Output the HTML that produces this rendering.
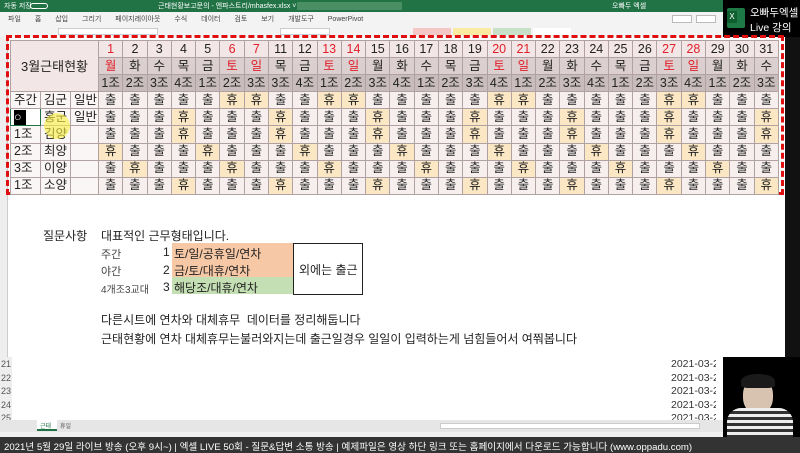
<!DOCTYPE html>
<html><head><meta charset="utf-8"><style>
*{margin:0;padding:0;box-sizing:border-box}
body{width:800px;height:453px;overflow:hidden;background:#fff;font-family:"Liberation Sans","Noto Sans CJK KR",sans-serif;position:relative;color:#222}
.abs{position:absolute}
#tbl{position:absolute;left:10px;top:40px;border-collapse:collapse;table-layout:fixed;width:768px}
#tbl td{height:17.1px;border:1px solid #b0a2a2;text-align:center;font-size:12.5px;line-height:15px;background:#f7eeee;padding:0;white-space:nowrap;overflow:hidden}
#tbl td.h{background:#fbe7c4}
#tbl tr.hd td{background:#f3e6e6}
#tbl tr.wk td{background:#dccfcf}
#tbl tr.jo td{background:#c9bcbc}
#tbl td.r{color:#e0202a}
#tbl td.l{text-align:left;padding-left:3px;background:#fbf6f6}
#tbl td.big{background:#dccccc;font-size:13px}
.t{position:absolute;font-size:11.5px;white-space:nowrap}
</style></head><body>
<div class="abs" style="left:0;top:0;width:723px;height:12px;background:#217346"></div>
<div class="abs" style="left:30px;top:3px;width:18px;height:6px;border:1px solid #fff;border-radius:4px"></div>
<div class="t" style="left:4px;top:1px;font-size:7px;color:#fff">자동 저장</div>
<div class="t" style="left:158px;top:1px;font-size:7px;color:#fff">근태현황보고문의 - 엔파스트리/mhasfex.xlsx ˅</div>
<div class="abs" style="left:297px;top:2px;width:105px;height:8px;background:#4a8f63"></div>
<div class="t" style="top:1px;font-size:7px;color:#fff;left:612px">오빠두 엑셀</div>
<div class="abs" style="left:0;top:12px;width:723px;height:25px;background:#f3f3f3"></div>
<div class="t" style="left:8px;top:14px;font-size:7px;color:#444;word-spacing:12px">파일 홈 삽입 그리기 페이지레이아웃 수식 데이터 검토 보기 개발도구 PowerPivot</div>
<div class="abs" style="left:58px;top:28px;width:100px;height:7px;background:#fff;border:1px solid #ccc"></div>
<div class="abs" style="left:280px;top:28px;width:50px;height:7px;background:#fff;border:1px solid #ccc"></div>
<div class="abs" style="left:413px;top:28px;width:38px;height:7px;background:#f4c7c7"></div>
<div class="abs" style="left:453px;top:28px;width:38px;height:7px;background:#fbeaa2"></div>
<div class="abs" style="left:493px;top:28px;width:38px;height:7px;background:#c8dfc8"></div>
<div class="abs" style="left:533px;top:28px;width:38px;height:7px;background:#fff"></div>
<div class="abs" style="left:672px;top:15px;width:20px;height:8px;border:1px solid #bbb;background:#fff"></div>
<div class="abs" style="left:696px;top:15px;width:20px;height:8px;border:1px solid #bbb;background:#fff"></div>
<div class="abs" style="left:723px;top:0;width:77px;height:37px;background:#000"></div>
<div class="abs" style="left:727px;top:8px;width:18px;height:20px;background:#1d7a45;border-radius:2px"></div>
<div class="abs" style="left:727px;top:11px;width:10px;height:12px;background:#0f5e30;color:#fff;font-size:8px;text-align:center;line-height:12px">X</div>
<div class="t" style="left:750px;top:5px;color:#fff;font-size:10.5px">오빠두엑셀</div>
<div class="t" style="left:750px;top:20px;color:#fff;font-size:10.5px">Live 강의</div>
<div class="abs" style="left:0;top:37px;width:8px;height:383px;background:#eee;border-right:1px solid #ccc"></div>
<div class="abs" style="left:785px;top:37px;width:15px;height:320px;background:#111"></div>
<div class="abs" style="left:6px;top:35px;width:778px;height:160px;border:3px dashed #e01010"></div>
<table id="tbl">
<colgroup><col style="width:30px"><col style="width:30px"><col style="width:28px"><col span="28" style="width:24.29px"></colgroup>
<tr class="hd"><td class="big" colspan="3" rowspan="3">3월근태현황</td><td class="r">1</td><td>2</td><td>3</td><td>4</td><td>5</td><td class="r">6</td><td class="r">7</td><td>11</td><td>12</td><td class="r">13</td><td class="r">14</td><td>15</td><td>16</td><td>17</td><td>18</td><td>19</td><td class="r">20</td><td class="r">21</td><td>22</td><td>23</td><td>24</td><td>25</td><td>26</td><td class="r">27</td><td class="r">28</td><td>29</td><td>30</td><td>31</td></tr>
<tr class="wk"><td class="r">월</td><td>화</td><td>수</td><td>목</td><td>금</td><td class="r">토</td><td class="r">일</td><td>목</td><td>금</td><td class="r">토</td><td class="r">일</td><td>월</td><td>화</td><td>수</td><td>목</td><td>금</td><td class="r">토</td><td class="r">일</td><td>월</td><td>화</td><td>수</td><td>목</td><td>금</td><td class="r">토</td><td class="r">일</td><td>월</td><td>화</td><td>수</td></tr>
<tr class="jo"><td>1조</td><td>2조</td><td>3조</td><td>4조</td><td>1조</td><td>2조</td><td>3조</td><td>3조</td><td>4조</td><td>1조</td><td>2조</td><td>3조</td><td>4조</td><td>1조</td><td>2조</td><td>3조</td><td>4조</td><td>1조</td><td>2조</td><td>3조</td><td>4조</td><td>1조</td><td>2조</td><td>3조</td><td>4조</td><td>1조</td><td>2조</td><td>3조</td></tr>
<tr><td class="l">주간</td><td class="l">김군</td><td class="l">일반</td><td>출</td><td>출</td><td>출</td><td>출</td><td>출</td><td class="h">휴</td><td class="h">휴</td><td>출</td><td>출</td><td class="h">휴</td><td class="h">휴</td><td>출</td><td>출</td><td>출</td><td>출</td><td>출</td><td class="h">휴</td><td class="h">휴</td><td>출</td><td>출</td><td>출</td><td>출</td><td>출</td><td class="h">휴</td><td class="h">휴</td><td>출</td><td>출</td><td>출</td></tr>
<tr><td class="l" style="background:#fff;border:1px solid #217346"><span style="display:inline-block;background:#000;color:#fff;width:12px">○</span></td><td class="l">홍군</td><td class="l">일반</td><td>출</td><td>출</td><td>출</td><td class="h">휴</td><td>출</td><td>출</td><td>출</td><td class="h">휴</td><td>출</td><td>출</td><td>출</td><td class="h">휴</td><td>출</td><td>출</td><td>출</td><td class="h">휴</td><td>출</td><td>출</td><td>출</td><td class="h">휴</td><td>출</td><td>출</td><td>출</td><td class="h">휴</td><td>출</td><td>출</td><td>출</td><td class="h">휴</td></tr>
<tr><td class="l">1조</td><td class="l">김양</td><td class="l"></td><td>출</td><td>출</td><td>출</td><td class="h">휴</td><td>출</td><td>출</td><td>출</td><td class="h">휴</td><td>출</td><td>출</td><td>출</td><td class="h">휴</td><td>출</td><td>출</td><td>출</td><td class="h">휴</td><td>출</td><td>출</td><td>출</td><td class="h">휴</td><td>출</td><td>출</td><td>출</td><td class="h">휴</td><td>출</td><td>출</td><td>출</td><td class="h">휴</td></tr>
<tr><td class="l">2조</td><td class="l">최양</td><td class="l"></td><td class="h">휴</td><td>출</td><td>출</td><td>출</td><td class="h">휴</td><td>출</td><td>출</td><td>출</td><td class="h">휴</td><td>출</td><td>출</td><td>출</td><td class="h">휴</td><td>출</td><td>출</td><td>출</td><td class="h">휴</td><td>출</td><td>출</td><td>출</td><td class="h">휴</td><td>출</td><td>출</td><td>출</td><td class="h">휴</td><td>출</td><td>출</td><td>출</td></tr>
<tr><td class="l">3조</td><td class="l">이양</td><td class="l"></td><td>출</td><td class="h">휴</td><td>출</td><td>출</td><td>출</td><td class="h">휴</td><td>출</td><td>출</td><td>출</td><td class="h">휴</td><td>출</td><td>출</td><td>출</td><td class="h">휴</td><td>출</td><td>출</td><td>출</td><td class="h">휴</td><td>출</td><td>출</td><td>출</td><td class="h">휴</td><td>출</td><td>출</td><td>출</td><td class="h">휴</td><td>출</td><td>출</td></tr>
<tr><td class="l">1조</td><td class="l">소양</td><td class="l"></td><td>출</td><td>출</td><td>출</td><td class="h">휴</td><td>출</td><td>출</td><td>출</td><td class="h">휴</td><td>출</td><td>출</td><td>출</td><td class="h">휴</td><td>출</td><td>출</td><td>출</td><td class="h">휴</td><td>출</td><td>출</td><td>출</td><td class="h">휴</td><td>출</td><td>출</td><td>출</td><td class="h">휴</td><td>출</td><td>출</td><td>출</td><td class="h">휴</td></tr>
</table>
<div class="abs" style="left:44px;top:113px;width:26px;height:26px;border-radius:50%;background:rgba(250,240,60,.6)"></div>
<div class="t" style="left:43px;top:227px;font-size:12px">질문사항</div>
<div class="t" style="left:101px;top:227px;font-size:12px">대표적인 근무형태입니다.</div>
<div class="t" style="left:101px;top:246px;font-size:11px;color:#444">주간</div>
<div class="t" style="left:101px;top:263px;font-size:11px;color:#444">야간</div>
<div class="t" style="left:101px;top:281px;font-size:10px;color:#444">4개조3교대</div>
<div class="t" style="left:163px;top:245px;font-size:12px">1</div>
<div class="t" style="left:163px;top:263px;font-size:12px">2</div>
<div class="t" style="left:163px;top:280px;font-size:12px">3</div>
<div class="abs" style="left:172px;top:243px;width:121px;height:34px;background:#f7c8a6"></div>
<div class="abs" style="left:172px;top:277px;width:121px;height:17px;background:#c4dfb3"></div>
<div class="t" style="left:174px;top:245px;font-size:12px">토/일/공휴일/연차</div>
<div class="t" style="left:174px;top:262px;font-size:12px">금/토/대휴/연차</div>
<div class="t" style="left:174px;top:279px;font-size:12px">해당조/대휴/연차</div>
<div class="abs" style="left:293px;top:243px;width:70px;height:52px;border:1.5px solid #222"></div>
<div class="t" style="left:299px;top:261px;font-size:12px">외에는 출근</div>
<div class="t" style="left:101px;top:311px;font-size:12px">다른시트에 연차와 대체휴무&nbsp; 데이터를 정리해둡니다</div>
<div class="t" style="left:101px;top:330px;font-size:12px">근태현황에 연차 대체휴무는불러와지는데 출근일경우 일일이 입력하는게 넘힘들어서 여쭤봅니다</div>
<div class="abs" style="left:0;top:357px;width:12px;height:63px;background:#eee"></div>
<div class="t" style="left:1px;top:358px;font-size:9px;color:#555;line-height:13.5px">21<br>22<br>23<br>24<br>25</div>
<div class="t" style="left:671px;top:358px;font-size:10.5px;color:#333;line-height:13.5px;width:45px;overflow:hidden">2021-03-20<br>2021-03-21<br>2021-03-22<br>2021-03-23<br>2021-03-24</div>
<div class="abs" style="left:0;top:420px;width:723px;height:12px;background:#e6e6e6"></div>
<div class="abs" style="left:37px;top:420px;width:20px;height:11px;background:#fff;border-bottom:2px solid #217346"></div>
<div class="t" style="left:40px;top:421px;font-size:6px;color:#217346">근태</div>
<div class="t" style="left:60px;top:421px;font-size:6px;color:#555">휴일</div>
<div class="abs" style="left:440px;top:423px;width:260px;height:6px;background:#fff;border:1px solid #ccc"></div>
<div class="abs" style="left:0;top:432px;width:723px;height:6px;background:#f0f0f0"></div>
<div class="abs" style="left:723px;top:357px;width:77px;height:80px;background:#000"></div>
<div class="abs" style="left:743px;top:378px;width:30px;height:36px;border-radius:45%;background:#d8c2b0"></div>
<div class="abs" style="left:741px;top:374px;width:34px;height:14px;border-radius:50% 50% 20% 20%;background:#1a1a1a"></div>
<div class="abs" style="left:727px;top:408px;width:66px;height:30px;border-radius:14px 14px 0 0;background:repeating-linear-gradient(180deg,#eee 0 3px,#333 3px 6px)"></div>
<div class="abs" style="left:0;top:437px;width:800px;height:16px;background:#333"></div>
<div class="t" style="left:4px;top:439px;font-size:9.6px;color:#fff">2021년 5월 29일 라이브 방송 (오후 9시~) | 엑셀 LIVE 50회 - 질문&amp;답변 소통 방송 | 예제파일은 영상 하단 링크 또는 홈페이지에서 다운로드 가능합니다 (www.oppadu.com)</div>
</body></html>
